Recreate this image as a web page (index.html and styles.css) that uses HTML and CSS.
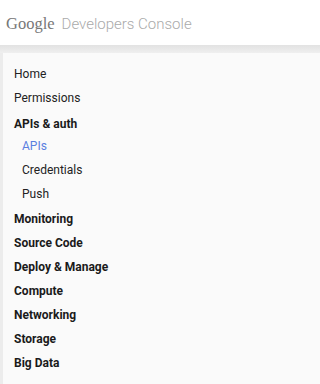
FILE: index.html
```html
<!DOCTYPE html>
<html>
<head>
<meta charset="utf-8">
<link rel="stylesheet" href="styles.css">
</head>
<body>
<header class="top">
  <span class="logo">Google</span>
  <span class="product">Developers Console</span>
</header>
<div class="shade"></div>
<div class="wrap">
  <nav class="nav">
    <a class="item">Home</a>
    <a class="item">Permissions</a>
    <a class="item group head">APIs &amp; auth</a>
    <a class="item sub first active">APIs</a>
    <a class="item sub">Credentials</a>
    <a class="item sub">Push</a>
    <a class="item group head2">Monitoring</a>
    <a class="item group">Source Code</a>
    <a class="item group">Deploy &amp; Manage</a>
    <a class="item group">Compute</a>
    <a class="item group">Networking</a>
    <a class="item group">Storage</a>
    <a class="item group">Big Data</a>
  </nav>
</div>
</body>
</html>
```

FILE: styles.css
```css
html, body {
  margin: 0;
  padding: 0;
  background: #ffffff;
  font-family: Roboto, "Liberation Sans", Arial, sans-serif;
}
.top {
  height: 45px;
  display: flex;
  align-items: center;
  padding: 2px 0 0 6px;
  box-sizing: border-box;
  gap: 7px;
  background: #fff;
}
.logo {
  font-family: "Liberation Serif", "DejaVu Serif", serif;
  font-size: 16.5px;
  color: #777;
}
.product {
  font-size: 15px;
  font-weight: 300;
  color: #aaa;
}
.shade {
  height: 8px;
  background: linear-gradient(#e2e2e2, #efefef);
}
.wrap {
  background: #ececec;
  padding-left: 3px;
  height: 331px;
}
.nav {
  background: #fafafa;
  height: 100%;
  display: flex;
  flex-direction: column;
  padding: 9px 0 0 11px;
  box-sizing: border-box;
}
.item {
  font-size: 12px;
  line-height: 24px;
  color: #222;
}
.group {
  font-weight: bold;
  color: #1a1a1a;
}
.head {
  margin-top: 2px;
}
.head2 {
  margin-top: 1px;
}
.sub {
  padding-left: 8px;
  line-height: 24px;
}
.first {
  margin-top: -2px;
}
.active {
  color: #5a7fe0;
}
```
